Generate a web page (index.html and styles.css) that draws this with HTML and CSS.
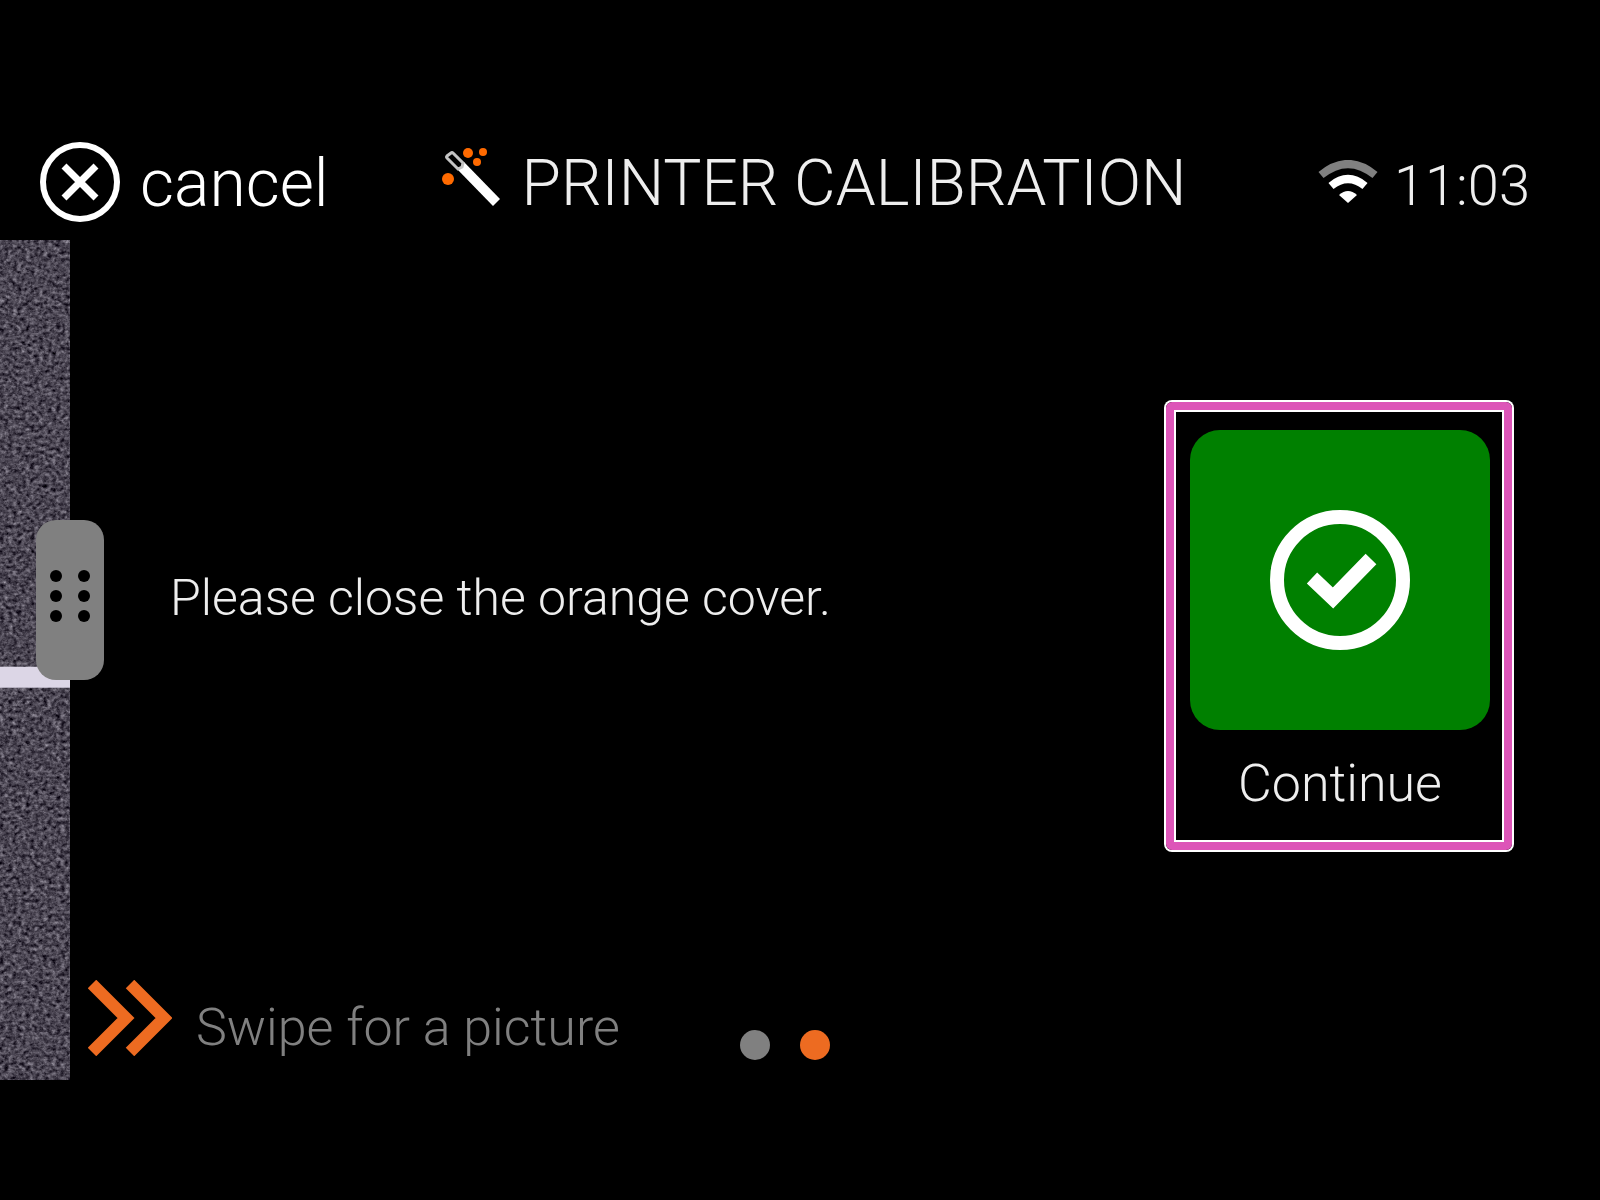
FILE: index.html
```html
<!DOCTYPE html>
<html lang="en">
<head>
  <meta charset="UTF-8">
  <meta name="viewport" content="width=device-width, initial-scale=1.0">
  <title>Printer calibration</title>
  <link rel="stylesheet" href="styles.css">
</head>
<body>
  <div class="screen">
    <header class="topbar">
      <button class="cancel" type="button">
        <svg width="80" height="80" viewBox="0 0 80 80" fill="none" stroke="#fff" aria-hidden="true">
          <circle cx="40" cy="40" r="37" stroke-width="6"/>
          <path d="M24 24 56 56M56 24 24 56" stroke-width="7"/>
        </svg>
        cancel
      </button>
      <h1 class="title">
        <svg width="60" height="60" viewBox="0 0 60 60" aria-hidden="true">
          <path d="M15 21 22 14 58 51 51 58Z" fill="#fff"/>
          <path d="M5 10Q4 9 5 8L9 5Q10 4 11 5L21 15 20 19 16 21Z" fill="#000" stroke="#c4c4c4" stroke-width="3"/>
          <g fill="#ff6a00">
            <circle cx="26" cy="5" r="5"/>
            <circle cx="41" cy="4" r="4"/>
            <circle cx="35" cy="14" r="4"/>
            <circle cx="6" cy="31" r="6"/>
          </g>
        </svg>
        PRINTER CALIBRATION
      </h1>
      <div class="clock">
        <svg width="60" height="44" viewBox="0 0 60 44" fill="none" aria-hidden="true">
          <path d="M3 15Q30-7 57 15" stroke="#808080" stroke-width="8"/>
          <path d="M13 26Q30 12 47 26" stroke="#fff" stroke-width="8"/>
          <path d="M21 35Q30 27 39 35L30 43Z" fill="#fff"/>
        </svg>
        <time>11:03</time>
      </div>
    </header>

    <div class="panel">
      <div class="photo">
        <svg class="sheet" width="100%" height="100%" aria-hidden="true">
          <filter id="grain" x="0" y="0" width="100%" height="100%" color-interpolation-filters="sRGB">
            <feTurbulence type="fractalNoise" baseFrequency="0.23 0.27" numOctaves="4" seed="4"/>
            <feColorMatrix values="0.5 0.5 0 0 -0.21  0.5 0.5 0 0 -0.23  0.5 0.5 0 0 -0.18  0 0 0 0 1"/>
          </filter>
          <rect width="100%" height="100%" filter="url(#grain)"/>
          <rect y="50.8%" width="100%" height="21" fill="#dcd6e6"/>
        </svg>
        <button class="handle" type="button" aria-label="Swipe">
          <svg width="68" height="160" viewBox="0 0 68 160" aria-hidden="true">
            <circle cx="20" cy="56" r="6"/><circle cx="48" cy="56" r="6"/>
            <circle cx="20" cy="76" r="6"/><circle cx="48" cy="76" r="6"/>
            <circle cx="20" cy="96" r="6"/><circle cx="48" cy="96" r="6"/>
          </svg>
        </button>
      </div>

      <div class="page">
        <main class="step">
          <p class="message">Please close the orange cover.</p>
          <button class="continue" type="button">
            <span class="tile">
              <svg width="140" height="140" viewBox="0 0 140 140" fill="none" stroke="#fff" aria-hidden="true">
                <circle cx="70" cy="70" r="63" stroke-width="14"/>
                <path d="M42 68 63 88 101 49" stroke-width="15"/>
              </svg>
            </span>
            Continue
          </button>
        </main>
        <footer class="bottom">
          <div class="hint">
            <svg width="84" height="76" viewBox="0 0 84 76" fill="none" stroke="#ed6b21" stroke-width="12" aria-hidden="true">
              <path d="M4 4 38 38 4 72M42 4 76 38 42 72"/>
            </svg>
            Swipe for a picture
          </div>
          <nav class="dots">
            <button class="dot" type="button" aria-label="Page 1"></button>
            <button class="dot active" type="button" aria-label="Page 2"></button>
          </nav>
        </footer>
      </div>
    </div>
  </div>
</body>
</html>
```
FILE: styles.css
```css
* {
  box-sizing: border-box;
}
body {
  margin: 0;
  background: #000;
  color: #eee;
  font-family: Roboto, "Liberation Sans", sans-serif;
  font-weight: 300;
}
button {
  padding: 0;
  border: none;
  background: none;
  color: inherit;
  font: inherit;
  cursor: pointer;
}
svg {
  display: block;
  flex-shrink: 0;
}
.screen {
  display: flex;
  flex-direction: column;
  min-height: 100vh;
  padding: 120px 0;
}
.topbar {
  display: grid;
  grid-template-columns: 1fr auto 1fr;
  align-items: center;
  height: 120px;
  padding: 8px 12px 0 40px;
}
.cancel {
  display: flex;
  align-items: center;
  justify-self: start;
  gap: 20px;
  color: #fff;
  font-size: 66px;
  line-height: 80px;
}
.cancel svg {
  margin-bottom: 4px;
}
.title {
  display: flex;
  align-items: center;
  gap: 20px;
  margin: 0;
  font-size: 64px;
  font-weight: 300;
  line-height: 80px;
  white-space: nowrap;
}
.title svg {
  margin-bottom: 12px;
}
.clock {
  display: flex;
  align-items: center;
  justify-self: end;
  gap: 16px;
  padding: 4px 58px 0 0;
  font-size: 56px;
  line-height: 80px;
}
.clock svg {
  margin-bottom: 8px;
}
.panel {
  display: flex;
  flex: 1;
}
.photo {
  position: relative;
  width: 70px;
}
.sheet {
  position: absolute;
  inset: 0;
}
/* sits over the edge of the photo */
.handle {
  position: absolute;
  top: 280px;
  left: 36px;
  border-radius: 20px;
  background: #808080;
}
.page {
  display: flex;
  flex: 1;
  flex-direction: column;
}
.step {
  display: flex;
  flex: 1;
  align-items: center;
  justify-content: space-between;
  padding: 0 88px 0 100px;
}
.message {
  margin: 0;
  padding-bottom: 4px;
  font-size: 50px;
  line-height: 60px;
}
.continue {
  display: flex;
  flex-direction: column;
  align-items: center;
  gap: 24px;
  margin-top: 52px;
  padding: 20px 14px 28px 16px;
  border: 8px solid #dd55b8;
  border-radius: 6px;
  box-shadow: 0 0 0 2px #fff, inset 0 0 0 2px #fff;
  font-size: 52px;
  line-height: 60px;
}
.tile {
  display: grid;
  place-items: center;
  width: 300px;
  height: 300px;
  border-radius: 30px;
  background: #008000;
}
.bottom {
  display: grid;
  grid-template-columns: 1fr auto 1fr;
  align-items: start;
  height: 120px;
  padding: 20px 118px 20px 18px;
}
.hint {
  display: flex;
  align-items: flex-start;
  gap: 24px;
  color: #808080;
  font-size: 52px;
  line-height: 96px;
  white-space: nowrap;
}
.dots {
  display: flex;
  gap: 30px;
  padding-top: 50px;
}
.dot {
  width: 30px;
  height: 30px;
  border-radius: 50%;
  background: #808080;
}
.dot.active {
  background: #ed6b21;
}
```
